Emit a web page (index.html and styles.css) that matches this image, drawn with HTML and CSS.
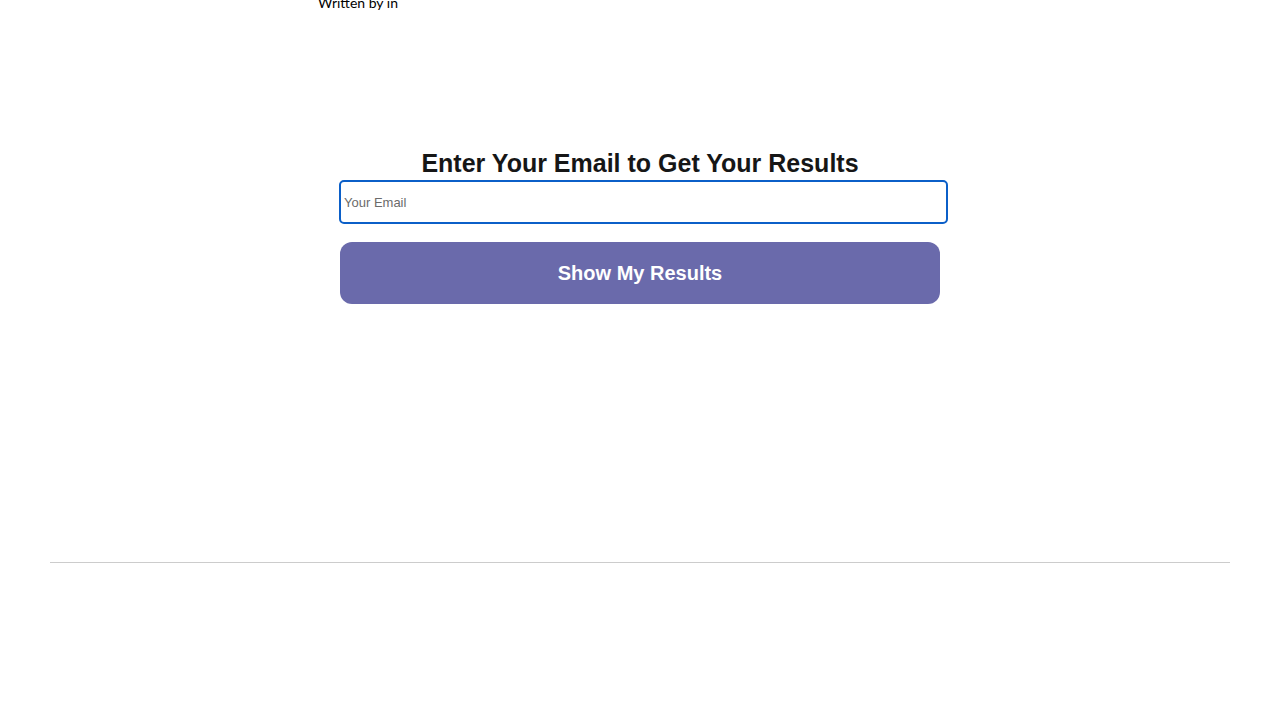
FILE: index.html
```html
<!DOCTYPE html>
<html lang="en">
<head>
  <meta charset="UTF-8">
  <meta name="viewport" content="width=device-width, initial-scale=1.0">
  <title>Get Your Results</title>
  <link rel="stylesheet" href="styles.css">
</head>
<body>
  <div class="byline">Written by in</div>

  <div class="email-gate">
    <h2>Enter Your Email to Get Your Results</h2>
    <form class="email-form" onsubmit="return false;">
      <input type="email" class="email-input" placeholder="Your Email">
      <button type="submit" class="results-btn">Show My Results</button>
    </form>
  </div>

  <div class="page-rule"></div>
</body>
</html>
```

FILE: styles.css
```css
body {
  margin: 0;
  font-family: 'Liberation Sans', Arial, sans-serif;
  background: #ffffff;
  color: #161616;
}
.byline {
  font-family: Lato, 'Open Sans', sans-serif;
  font-size: 14px;
  font-weight: 400;
  color: #000;
  line-height: 17px;
  margin: -6px 0 0 318px;
}
.email-gate {
  width: 600px;
  margin: 138px auto 0;
  text-align: center;
}
.email-gate h2 {
  font-size: 25px;
  font-weight: 700;
  line-height: 28px;
  margin: 0 0 3px;
  color: #161616;
}
.email-form {
  display: flex;
  flex-direction: column;
}
.email-input {
  display: block;
  box-sizing: border-box;
  width: 609px;
  height: 44px;
  margin: 0 0 18px -1px;
  padding: 0 3px;
  border: 2px solid #0b5fc8;
  border-radius: 5px;
  font-family: 'Liberation Sans', Arial, sans-serif;
  font-size: 13px;
  color: #333;
  outline: none;
}
.email-input::placeholder {
  color: #6b6b6b;
}
.results-btn {
  display: block;
  width: 600px;
  height: 62px;
  border: none;
  border-radius: 12px;
  background: #6a6aab;
  color: #ffffff;
  font-family: 'Liberation Sans', Arial, sans-serif;
  font-size: 20px;
  font-weight: 700;
  cursor: pointer;
}
.page-rule {
  margin: 258px 50px 0;
  border-top: 1px solid #cccccc;
}
```
